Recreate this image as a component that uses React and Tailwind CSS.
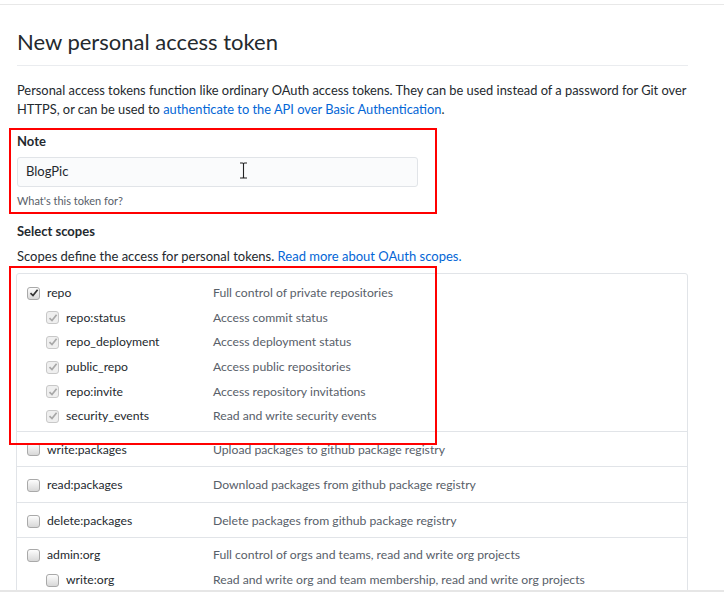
import React from "react";

const font = { fontFamily: 'Lato, "Noto Sans", sans-serif' };

function Box({ checked, disabled }) {
  return (
    <span
      className={`inline-flex w-[13px] h-[13px] shrink-0 items-center justify-center rounded-[3px] border ${
        disabled ? "border-[#c8c8c8] bg-[#efefef]" : "border-[#a9a9a9] bg-gradient-to-b from-[#fdfdfd] to-[#d8d8d8]"
      }`}
    >
      {checked && (
        <svg width="10" height="10" viewBox="0 0 10 10">
          <path
            d="M1.5 5.2 L4 7.6 L8.6 1.8"
            fill="none"
            stroke={disabled ? "#a8a8a8" : "#333"}
            strokeWidth="1.7"
          />
        </svg>
      )}
    </span>
  );
}

function Row({ label, desc, sub, checked, disabled }) {
  return (
    <div className="flex h-[24.6px] items-center">
      <div className={`flex w-[196px] items-center ${sub ? "pl-[29px]" : "pl-[10px]"}`}>
        <Box checked={checked} disabled={disabled} />
        <span className="ml-[7px] text-[12.2px] text-[#24292e]">{label}</span>
      </div>
      <span className="text-[12.2px] text-[#586069]">{desc}</span>
    </div>
  );
}

const groups = [
  {
    rows: [
      { label: "repo", desc: "Full control of private repositories", checked: true },
      { label: "repo:status", desc: "Access commit status", sub: true, checked: true, disabled: true },
      { label: "repo_deployment", desc: "Access deployment status", sub: true, checked: true, disabled: true },
      { label: "public_repo", desc: "Access public repositories", sub: true, checked: true, disabled: true },
      { label: "repo:invite", desc: "Access repository invitations", sub: true, checked: true, disabled: true },
      { label: "security_events", desc: "Read and write security events", sub: true, checked: true, disabled: true },
    ],
    pad: "pt-[7px] pb-[2px]",
  },
  { rows: [{ label: "write:packages", desc: "Upload packages to github package registry" }], pad: "pt-[6px] pb-[4px]" },
  { rows: [{ label: "read:packages", desc: "Download packages from github package registry" }], pad: "pt-[6px] pb-[4px]" },
  { rows: [{ label: "delete:packages", desc: "Delete packages from github package registry" }], pad: "pt-[6px] pb-[4px]" },
  {
    rows: [
      { label: "admin:org", desc: "Full control of orgs and teams, read and write org projects" },
      { label: "write:org", desc: "Read and write org and team membership, read and write org projects", sub: true },
    ],
    pad: "pt-[5px]",
  },
];

export default function App() {
  return (
    <div className="relative w-[724px] h-[592px] overflow-hidden bg-white" style={font}>
      <div className="mt-[4px] border-t border-[#e8e8e8]" />

      <div className="w-[688px] pl-[17px]">
        <h1 className="pt-[22px] pb-[8px] text-[22px] leading-[30px] font-normal text-[#24292e] border-b border-[#eaecef]">
          New personal access token
        </h1>

        <p className="mt-[15px] whitespace-nowrap text-[12.85px] leading-[19px] text-[#24292e]">
          Personal access tokens function like ordinary OAuth access tokens. They can be used instead of a password for Git over
          <br />
          HTTPS, or can be used to{" "}
          <span className="text-[#0366d6]">authenticate to the API over Basic Authentication</span>.
        </p>

        <div className="mt-[12px] text-[13px] font-bold leading-[20px] text-[#24292e]">Note</div>
        <div className="mt-[6px] flex h-[30px] w-[401px] items-center rounded-[3px] border border-[#e1e4e8] bg-[#fafbfc] pl-[8px] text-[13px] text-[#24292e]">
          BlogPic
        </div>
        <div className="mt-[5px] text-[11px] leading-[18px] text-[#586069]">What's this token for?</div>

        <div className="mt-[11px] text-[13px] font-bold leading-[20px] text-[#24292e]">Select scopes</div>
        <p className="mt-[5px] text-[13px] leading-[20px] text-[#24292e]">
          Scopes define the access for personal tokens.{" "}
          <span className="text-[#0366d6]">Read more about OAuth scopes.</span>
        </p>

        <div className="mt-[7px] -ml-[1px] rounded-[3px] border border-[#e1e4e8]">
          {groups.map((g, i) => (
            <div key={i} className={`${g.pad} ${i > 0 ? "border-t border-[#e1e4e8]" : ""}`}>
              {g.rows.map((r) => (
                <Row key={r.label} {...r} />
              ))}
            </div>
          ))}
        </div>
      </div>

      <div className="absolute left-0 right-0 top-[590px] h-[2px] bg-[#e6e6e6]" />

      {/* annotation boxes */}
      <div className="absolute left-[9px] top-[128px] w-[428px] h-[86px] border-2 border-[#ff0000]" />
      <div className="absolute left-[9px] top-[266px] w-[428px] h-[179px] border-2 border-[#ff0000]" />

      {/* text cursor */}
      <svg className="absolute left-[239px] top-[162px]" width="9" height="17" viewBox="0 0 9 17">
        <path d="M1 1 H3.5 Q4.5 1 4.5 2.5 V14.5 Q4.5 16 3.5 16 H1 M8 1 H5.5 Q4.5 1 4.5 2.5 M4.5 14.5 Q4.5 16 5.5 16 H8" fill="none" stroke="#222" strokeWidth="1.1" />
      </svg>
    </div>
  );
}
